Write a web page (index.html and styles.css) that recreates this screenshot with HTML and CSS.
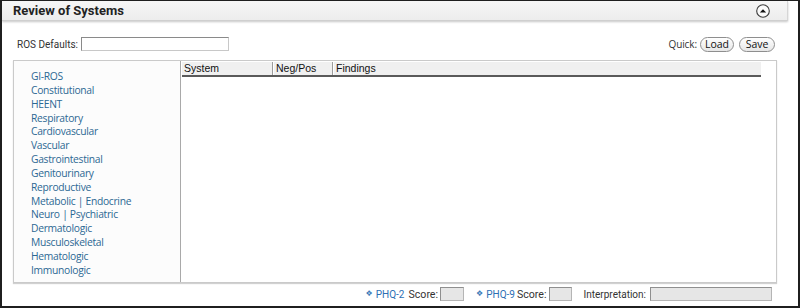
FILE: index.html
```html
<!DOCTYPE html>
<html>
<head>
<meta charset="utf-8">
<link rel="stylesheet" href="styles.css">
</head>
<body>
<div class="page">
  <div class="hdr">
    <span class="title">Review of Systems</span>
    <span class="collapse"><svg width="14" height="14" viewBox="0 0 14 14"><circle cx="7" cy="7" r="6.3" fill="#fafafa" stroke="#3a3a3a" stroke-width="1.1"/><path d="M3.8 8.6 L7 5.2 L10.2 8.6 Z" fill="#111"/></svg></span>
  </div>
  <div class="toolbar">
    <label class="lbl">ROS Defaults: <span class="inp defaults"></span></label>
    <div class="quick">
      <span class="qlbl">Quick:</span>
      <span class="btn load">Load</span>
      <span class="btn save">Save</span>
    </div>
  </div>
  <div class="panel">
    <ul class="systems">
      <li>GI-ROS</li>
      <li>Constitutional</li>
      <li>HEENT</li>
      <li>Respiratory</li>
      <li>Cardiovascular</li>
      <li>Vascular</li>
      <li>Gastrointestinal</li>
      <li>Genitourinary</li>
      <li>Reproductive</li>
      <li>Metabolic | Endocrine</li>
      <li>Neuro | Psychiatric</li>
      <li>Dermatologic</li>
      <li>Musculoskeletal</li>
      <li>Hematologic</li>
      <li>Immunologic</li>
    </ul>
    <div class="grid">
      <div class="ghead">
        <div class="col c1">System</div>
        <div class="col c2">Neg/Pos</div>
        <div class="col c3">Findings</div>
      </div>
    </div>
  </div>
  <div class="footer">
    <span class="dia">❖</span><span class="phq">PHQ-2</span>
    <span class="sc">Score:</span><span class="inp score"></span>
    <span class="dia d9">❖</span><span class="phq">PHQ-9</span>
    <span class="sc sc9">Score:</span><span class="inp score s9"></span>
    <span class="sc interp">Interpretation:</span><span class="inp interp-in"></span>
  </div>
</div>
</body>
</html>
```
FILE: styles.css
```css
html, body { margin: 0; padding: 0; background: #fff; }
.page {
  width: 800px; height: 308px; box-sizing: border-box;
  border: 2px solid #1f1f1f; border-top-width: 1px;
  font-family: Roboto, "Liberation Sans", sans-serif;
  overflow: hidden;
}
.hdr {
  height: 19px; margin-right: 10px;
  background: linear-gradient(#f6f6f6, #ededed);
  border-bottom: 1px solid #cfcfcf;
  border-right: 1px solid #d6d6d6;
  box-shadow: 0 1px 2px rgba(0,0,0,0.22);
  display: flex; align-items: center; justify-content: space-between;
  padding: 0 17px 0 11px;
}
.title { font-weight: bold; font-size: 13px; color: #222; }
.collapse { display: flex; width: 14px; height: 14px; margin-top: 1px; }
.toolbar {
  display: flex; justify-content: space-between; align-items: center;
  margin-top: 15px; padding: 0 23px 0 15px; height: 16px;
}
.lbl { font-size: 10px; color: #333; display: flex; align-items: center; gap: 3px; }
.inp { display: inline-block; box-sizing: border-box; height: 14px;
  border: 1px solid #c8c8c8; border-top-color: #8a8a8a; border-left-color: #8a8a8a; background: #fff; }
.defaults { width: 148px; }
.quick { display: flex; align-items: center; }
.qlbl { font-family: "Open Sans", sans-serif; font-size: 10px; color: #333; margin-right: 3px; letter-spacing: -0.1px; }
.btn {
  font-family: "Open Sans", sans-serif; font-size: 10.5px; color: #111;
  height: 15px; box-sizing: border-box; border: 1px solid #8e8e8e; border-radius: 8px;
  background: linear-gradient(#ffffff, #e6e6e6);
  display: flex; align-items: center; justify-content: center; line-height: 1;
}
.load { width: 34px; }
.save { width: 36px; margin-left: 5px; }
.panel {
  margin: 8px 21px 0 11px; height: 223px; box-sizing: border-box;
  border: 1px solid #cacaca; box-shadow: 0 1px 1px rgba(0,0,0,0.18);
  display: flex;
}
.systems {
  list-style: none; margin: 0; padding: 9px 0 0 17px;
  width: 167px; box-sizing: border-box; border-right: 1px solid #a9a9a9;
  background: #fcfcfc;
  font-family: "Open Sans", sans-serif; font-size: 10.3px; letter-spacing: -0.3px;
  color: #2c6893; line-height: 13.85px;
}
.grid { flex: 1; padding: 1px 15px 0 1px; }
.ghead { display: flex; height: 15px; box-sizing: border-box; background: #f0f0f0; border-bottom: 2px solid #5a5a5a; }
.col {
  font-family: "Liberation Sans", Arial, sans-serif; font-size: 10.5px; color: #111;
  padding-left: 2px; box-sizing: border-box; line-height: 13px;
  border-right: 1px solid #9c9c9c; box-shadow: 1px 0 0 #fff;
}
.c1 { width: 91px; }
.c2 { width: 59px; margin-left: 1px; }
.c3 { flex: 1; border-right: none; box-shadow: none; margin-left: 1px; }
.footer {
  display: flex; justify-content: flex-end; align-items: center;
  margin-top: 4px; padding-right: 26px; height: 14px;
  font-size: 10px;
}
.phq { color: #2d6fb4; margin-left: 3px; font-size: 10px; }
.dia { font-family: "DejaVu Sans", sans-serif; font-size: 8px; color: #3b79b8; position: relative; top: -1px; }
.d9 { margin-left: 12px; }
.sc { color: #333; margin-left: 4px; margin-right: 2px; font-size: 10.6px; }
.score { width: 24px; background: #e6e6e6; border-color: #b5b5b5; border-top-color: #8f8f8f; border-left-color: #8f8f8f; }
.sc9 { margin-left: 2px; }
.s9 { width: 23px; }
.interp { margin-left: 12px; margin-right: 4px; font-size: 10px; }
.interp-in { width: 122px; background: #e6e6e6; border-color: #b5b5b5; border-top-color: #8f8f8f; border-left-color: #8f8f8f; }
```
